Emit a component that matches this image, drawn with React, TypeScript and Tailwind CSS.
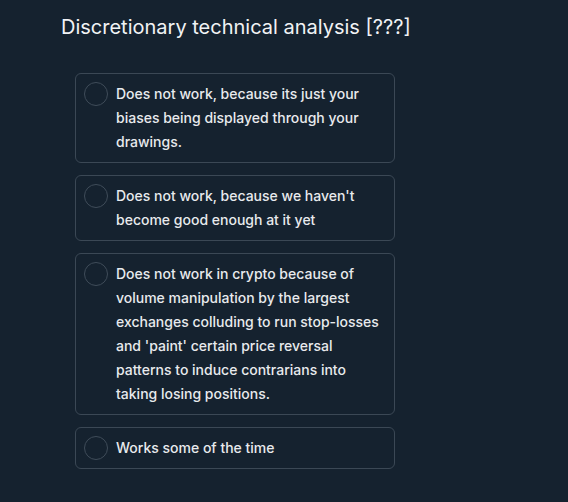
import React, { useState } from 'react'

const options = [
  'Does not work, because its just your biases being displayed through your drawings.',
  "Does not work, because we haven't become good enough at it yet",
  "Does not work in crypto because of volume manipulation by the largest exchanges colluding to run stop-losses and 'paint' certain price reversal patterns to induce contrarians into taking losing positions.",
  'Works some of the time',
]

export default function App() {
  const [selected, setSelected] = useState<number | null>(null)

  return (
    <div className="min-h-[502px] w-full bg-[#15222f] font-['Inter',sans-serif] pt-[13px]">
      <h2 className="ml-[61px] text-[20px] leading-[28px] text-[#f1f3f5]">
        Discretionary technical analysis [???]
      </h2>
      <div className="ml-[75px] mt-[32px] flex w-[320px] flex-col gap-3">
        {options.map((text, i) => (
          <button
            key={i}
            onClick={() => setSelected(i)}
            className="flex items-start gap-2 rounded-md border border-[#3b4855] px-2 py-2 text-left"
          >
            <span
              className={`h-6 w-6 shrink-0 rounded-full border ${
                selected === i ? 'border-[#5b8def] bg-[#5b8def]/30' : 'border-[#3f4c59]'
              }`}
            />
            <span className="text-[14px] font-medium leading-[24px] text-[#e8eaed]">{text}</span>
          </button>
        ))}
      </div>
    </div>
  )
}
